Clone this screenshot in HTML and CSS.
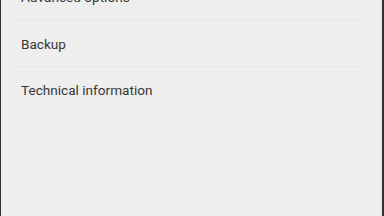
FILE: index.html
```html
<!DOCTYPE html>
<html lang="en">

<head>
    <meta charset="UTF-8">
    <meta name="viewport" content="width=device-width, initial-scale=1.0">
    <title>Settings</title>
    <link rel="stylesheet" href="styles.css">
</head>

<body>
    <div class="screen">
        <ul class="menu">
            <li class="item">Advanced options</li>
            <li class="item">Backup</li>
            <li class="item">Technical information</li>
        </ul>
    </div>
</body>

</html>
```
FILE: styles.css
```css
html,
body {
    margin: 0;
}

body {
    background: #333333;
}

.screen {
    height: 216px;
    margin: 0 2px 0 1px;
    background: #eeeeee;
    border-right: 1px solid #e2e2e2;
    box-sizing: border-box;
    overflow: hidden;
    font-family: Roboto, "Liberation Sans", sans-serif;
}

.menu {
    list-style: none;
    margin: -26px 0 0 0;
    padding: 0 15px 0 13px;
}

.item {
    height: 46px;
    display: flex;
    align-items: center;
    padding-left: 7px;
    font-size: 13.6px;
    color: #383838;
    box-sizing: border-box;
}

.item + .item {
    border-top: 1px solid #e6e6e6;
}
```
